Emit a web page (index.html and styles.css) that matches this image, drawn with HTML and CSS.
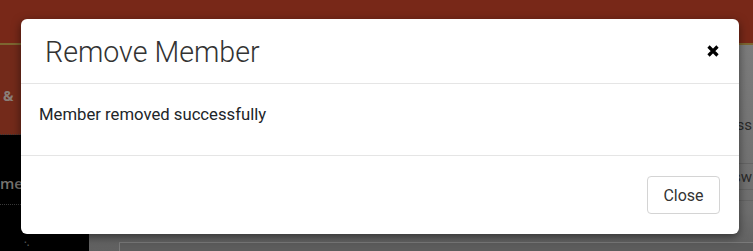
FILE: index.html
```html
<!DOCTYPE html>
<html>
<head>
<meta charset="utf-8">
<link rel="stylesheet" href="styles.css">
</head>
<body>
<div class="page">
  <div class="topbar"></div>
  <div class="goldline"></div>
  <div class="main">
    <aside class="sidebar">
      <div class="side-brand"><span class="side-amp">&amp;</span></div>
      <div class="side-item"><span>met</span></div>
      <div class="side-item side-item-last"><span class="side-dots">·.</span></div>
    </aside>
    <section class="content">
      <div class="panel">
        <div class="row row-a"><span class="cell">ss</span></div>
        <div class="row row-b"><span class="cell">ssw</span></div>
        <div class="row row-c"></div>
      </div>
      <div class="lower-box"></div>
    </section>
  </div>
</div>

<div class="modal">
  <div class="modal-header">
    <h4 class="modal-title">Remove Member</h4>
    <button class="modal-x" aria-label="Close">
      <svg width="12" height="12" viewBox="0 0 12 12"><path d="M1.5 1.5 L10.5 10.5 M10.5 1.5 L1.5 10.5" stroke="#000" stroke-width="3.2" stroke-linecap="butt"/></svg>
    </button>
  </div>
  <div class="modal-body">Member removed successfully</div>
  <div class="modal-footer">
    <button class="btn-close">Close</button>
  </div>
</div>
</body>
</html>
```
FILE: styles.css
```css
html, body {
  margin: 0;
  padding: 0;
}
body {
  width: 753px;
  height: 251px;
  overflow: hidden;
  background: #6a6a6a;
  font-family: "Open Sans", "Liberation Sans", sans-serif;
  position: relative;
}
.page {
  display: flex;
  flex-direction: column;
  height: 251px;
  overflow: hidden;
}
.topbar {
  height: 43px;
  background: #782818;
  flex: none;
}
.goldline {
  height: 2px;
  background: #7d6630;
  flex: none;
}
.main {
  display: flex;
  flex: 1;
  min-height: 0;
}
.sidebar {
  width: 89px;
  flex: none;
  background: #000;
  display: flex;
  flex-direction: column;
  overflow: hidden;
}
.side-brand {
  height: 89px;
  flex: none;
  background: #732a1a;
  border-bottom: 1px dotted #3a3a3a;
  display: flex;
  align-items: center;
  padding-left: 3px;
}
.side-amp {
  color: #8a7f78;
  font-weight: 700;
  font-size: 14px;
  margin-top: 12px;
}
.side-item {
  height: 69px;
  flex: none;
  border-bottom: 1px dotted #3a3a3a;
  display: flex;
  align-items: center;
}
.side-item span {
  color: #77736f;
  font-weight: 600;
  font-size: 15px;
  margin-top: 26px;
  margin-left: 0;
}
.side-item-last {
  border-bottom: none;
  align-items: flex-start;
}
.side-item-last .side-dots {
  margin-left: 24px;
  margin-top: 32px;
  font-size: 10px;
  color: #5a5a5a;
  line-height: 1;
}
.content {
  flex: 1;
  background: linear-gradient(#7c7c7c, #6e6e6e 80%, #606060);
  display: flex;
  flex-direction: column;
  padding: 0 0 0 30px;
}
.panel {
  margin-top: 63px;
  display: flex;
  flex-direction: column;
}
.row {
  display: flex;
  justify-content: flex-end;
  border-bottom: 1px solid #646464;
}
.row-a {
  height: 47px;
  padding-top: 8px;
  align-items: flex-start;
}
.row-b {
  height: 25px;
  align-items: center;
}
.row-c {
  height: 10px;
}
.cell {
  color: #2a2a2a;
  font-size: 15px;
  line-height: 18px;
  font-family: "Roboto", sans-serif;
  padding-right: 1px;
}
.lower-box {
  margin-top: auto;
  height: 8px;
  border-top: 1px solid #7a7a7a;
  border-left: 1px solid #7a7a7a;
  background: #5c5c5c;
}

/* modal (overlay) */
.modal {
  position: absolute;
  left: 21px;
  top: 19px;
  width: 718px;
  height: 215px;
  background: #fff;
  border-radius: 6px;
  box-shadow: 0 3px 10px rgba(0, 0, 0, 0.5);
  font-family: "Roboto", "Liberation Sans", sans-serif;
  display: flex;
  flex-direction: column;
  overflow: hidden;
}
.modal-header {
  height: 64px;
  border-bottom: 1px solid #e5e5e5;
  display: flex;
  align-items: center;
  justify-content: space-between;
  padding: 0 20px 0 24px;
  flex: none;
}
.modal-title {
  margin: 0;
  font-weight: 300;
  font-size: 28.6px;
  color: #333;
  line-height: 1;
  padding-top: 3px;
}
.modal-x {
  border: none;
  background: none;
  padding: 0;
  width: 12px;
  height: 12px;
  display: flex;
  margin-top: 0;
}
.modal-body {
  height: 52px;
  border-bottom: 1px solid #e5e5e5;
  padding: 19px 17px 0 18px;
  font-size: 16.7px;
  line-height: 24px;
  color: #212529;
  flex: none;
}
.modal-footer {
  flex: 1;
  display: flex;
  align-items: center;
  justify-content: flex-end;
  padding: 0 19px;
}
.btn-close {
  width: 73px;
  height: 38px;
  border: 1px solid #d4d4d4;
  border-radius: 4px;
  background: #fff;
  font-family: "Roboto", "Liberation Sans", sans-serif;
  font-size: 16px;
  color: #333;
  padding: 0;
}
```
